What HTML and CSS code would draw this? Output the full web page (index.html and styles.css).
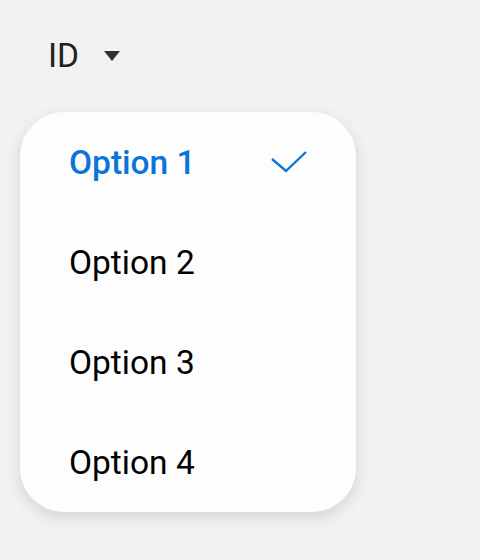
FILE: index.html
```html
<!DOCTYPE html>
<html>
<head>
<meta charset="utf-8">
<link rel="stylesheet" href="styles.css">
</head>
<body>
<div class="header">
  <span class="label">ID</span>
  <svg class="caret" width="16" height="10" viewBox="0 0 16 10"><path d="M0 0 H16 L8 10 Z" fill="#333"/></svg>
</div>
<ul class="menu">
  <li class="item selected"><span>Option 1</span>
    <svg class="check" width="38" height="24" viewBox="0 0 38 24"><path d="M2 9 L16 21 L36 2" fill="none" stroke="#0a74da" stroke-width="2.4"/></svg>
  </li>
  <li class="item"><span>Option 2</span></li>
  <li class="item"><span>Option 3</span></li>
  <li class="item"><span>Option 4</span></li>
</ul>
</body>
</html>
```
FILE: styles.css
```css
html, body { margin: 0; padding: 0; }
body {
  background: #f2f2f2;
  font-family: Roboto, "Noto Sans", sans-serif;
  width: 480px;
  height: 560px;
  overflow: hidden;
}
.header {
  display: flex;
  align-items: center;
  height: 40px;
  margin: 35px 0 0 48px;
  gap: 25px;
  color: #222;
}
.label { font-size: 33.5px; }
.caret { margin-top: 2px; }
.menu {
  list-style: none;
  margin: 37px 0 0 20px;
  padding: 0;
  width: 336px;
  background: #fdfdfd;
  border-radius: 44px;
  box-shadow: 0 5px 16px rgba(0,0,0,0.13);
}
.item {
  height: 100px;
  display: flex;
  align-items: center;
  justify-content: space-between;
  padding: 0 48px 0 49px;
  font-size: 33.5px;
  color: #000;
}
.item.selected { color: #0a74da; font-weight: 500; }
.check { margin-right: 0; }
```
